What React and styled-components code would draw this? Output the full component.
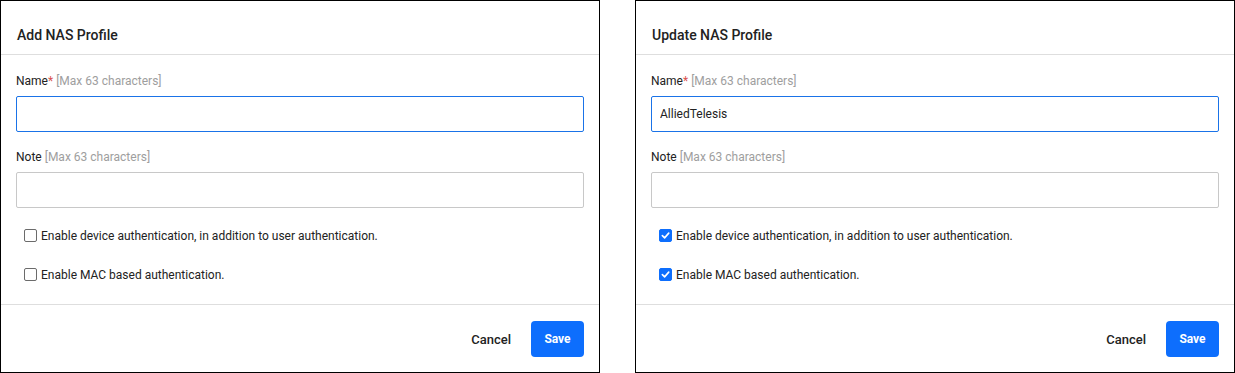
import React from "react";
import styled, { createGlobalStyle } from "styled-components";

const GlobalStyle = createGlobalStyle`
  html, body {
    margin: 0;
    padding: 0;
    background: #fff;
    font-family: Roboto, "Liberation Sans", Arial, sans-serif;
    color: #212121;
  }
`;

const Page = styled.div`
  display: grid;
  grid-template-columns: 600px 600px;
  column-gap: 35px;
  width: 1235px;
  height: 373px;
`;

const Dialog = styled.div`
  box-sizing: border-box;
  height: 373px;
  border: 1px solid #000;
  display: flex;
  flex-direction: column;
`;

const Header = styled.div`
  box-sizing: border-box;
  height: 54px;
  border-bottom: 1px solid #dedede;
  padding: 26px 16px 0;
  font-size: 14px;
  line-height: 16px;
  font-weight: 500;
  color: #222;
`;

const Body = styled.div`
  flex: 1;
  padding: 18px 15px 0 15px;
  display: flex;
  flex-direction: column;
  border-bottom: 1px solid #dedede;
`;

const Field = styled.div`
  & + & {
    margin-top: 17px;
  }
`;

const Label = styled.div`
  font-size: 12px;
  line-height: 16px;
  color: #222;
  margin-bottom: 7px;
`;

const Required = styled.span`
  color: #d9534f;
`;

const Hint = styled.span`
  color: #9e9e9e;
  margin-left: 3px;
`;

const Input = styled.input`
  box-sizing: border-box;
  width: 100%;
  height: 36px;
  border: 1px solid ${(p) => (p.$focus ? "#1a73e8" : "#c8c8c8")};
  border-radius: 2px;
  padding: 0 8px;
  font-family: inherit;
  font-size: 12px;
  color: #222;
  outline: none;
`;

const CheckList = styled.div`
  margin-top: 8px;
`;

const CheckRow = styled.label`
  display: flex;
  align-items: center;
  gap: 4px;
  height: 39px;
  padding-left: 8px;
  font-size: 12px;
  color: #222;
`;

const Box = styled.span`
  box-sizing: border-box;
  width: 13px;
  height: 13px;
  border-radius: 2px;
  display: inline-flex;
  align-items: center;
  justify-content: center;
  border: 1px solid ${(p) => (p.$checked ? "#0d6efd" : "#6b6b6b")};
  background: ${(p) => (p.$checked ? "#0d6efd" : "#fff")};
`;

const Footer = styled.div`
  flex: 0 0 67px;
  display: flex;
  align-items: center;
  justify-content: flex-end;
  gap: 8px;
  padding: 1px 15px 0 0;
  box-sizing: border-box;
`;

const Button = styled.button`
  height: 36px;
  border: none;
  border-radius: 4px;
  padding: 0 12px;
  min-width: ${(p) => (p.$primary ? "53px" : "0")};
  font-family: inherit;
  cursor: pointer;
  background: ${(p) => (p.$primary ? "#0d6efd" : "transparent")};
  color: ${(p) => (p.$primary ? "#fff" : "#222")};
  font-weight: ${(p) => (p.$primary ? 700 : 500)};
  font-size: ${(p) => (p.$primary ? "12px" : "13px")};
`;

const Check = ({ checked, children }) => (
  <CheckRow>
    <Box $checked={checked}>
      {checked && (
        <svg width="9" height="9" viewBox="0 0 10 10">
          <path d="M1.5 5.2 L4 7.6 L8.6 2.4" fill="none" stroke="#fff" strokeWidth="1.8" strokeLinecap="round" strokeLinejoin="round" />
        </svg>
      )}
    </Box>
    {children}
  </CheckRow>
);

const ProfileDialog = ({ title, name, checked }) => (
  <Dialog>
    <Header>{title}</Header>
    <Body>
      <Field>
        <Label>
          Name<Required>*</Required>
          <Hint>[Max 63 characters]</Hint>
        </Label>
        <Input $focus readOnly value={name} />
      </Field>
      <Field>
        <Label>
          Note<Hint>[Max 63 characters]</Hint>
        </Label>
        <Input readOnly value="" />
      </Field>
      <CheckList>
        <Check checked={checked}>Enable device authentication, in addition to user authentication.</Check>
        <Check checked={checked}>Enable MAC based authentication.</Check>
      </CheckList>
    </Body>
    <Footer>
      <Button>Cancel</Button>
      <Button $primary>Save</Button>
    </Footer>
  </Dialog>
);

export default function App() {
  return (
    <>
      <GlobalStyle />
      <Page>
        <ProfileDialog title="Add NAS Profile" name="" checked={false} />
        <ProfileDialog title="Update NAS Profile" name="AlliedTelesis" checked />
      </Page>
    </>
  );
}
